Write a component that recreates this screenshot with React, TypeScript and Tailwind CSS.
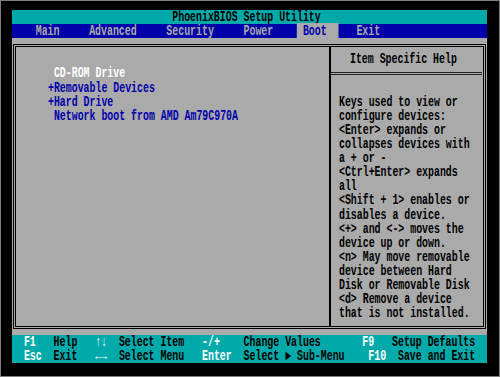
import React from "react";

const S = "origin-left scale-x-[0.70673] whitespace-pre";

function Row({ children, className = "" }: { children: React.ReactNode; className?: string }) {
  return <div className={`h-[14.12px] ${S} ${className}`}>{children}</div>;
}

const help = [
  "Keys used to view or",
  "configure devices:",
  "<Enter> expands or",
  "collapses devices with",
  "a + or -",
  "<Ctrl+Enter> expands",
  "all",
  "<Shift + 1> enables or",
  "disables a device.",
  "<+> and <-> moves the",
  "device up or down.",
  "<n> May move removable",
  "device between Hard",
  "Disk or Removable Disk",
  "<d> Remove a device",
  "that is not installed.",
];

function K({ children }: { children: React.ReactNode }) {
  return <span className="text-white">{children}</span>;
}

export default function App() {
  return (
    <div className="w-[500px] h-[377px] overflow-hidden bg-black border border-[#7f7f7f] pt-[9px] pl-[11px] font-['Liberation_Mono',monospace] text-[14px] leading-[14.12px] font-bold">
      <div className="w-[475px] h-[353px] flex flex-col bg-[#aaaaaa] overflow-hidden">
        {/* Title */}
        <div className="h-[14.12px] shrink-0 bg-[#00aaaa] text-black min-w-0">
          <Row>{"                           PhoenixBIOS Setup Utility"}</Row>
        </div>
        {/* Menu */}
        <div className="h-[14.12px] shrink-0 bg-[#0000aa] text-[#aaaaaa] min-w-0">
          <Row>
            {"    Main     Advanced     Security     Power    "}
            <span className="bg-[#aaaaaa] text-[#0000aa]">{" Boot  "}</span>
            {"   Exit"}
          </Row>
        </div>
        {/* Body */}
        <div className="h-[296.52px] shrink-0 pt-[5.76px] px-px">
          <div className="w-[473px] h-[285px] border-[3px] border-double border-black flex">
            <div className="w-[313px] min-w-0 shrink-0 pt-[19.48px] pl-[31.625px] text-[#0000aa]">
              <Row className="text-white">{" CD-ROM Drive"}</Row>
              <Row>{"+Removable Devices"}</Row>
              <Row>{"+Hard Drive"}</Row>
              <Row>{" Network boot from AMD Am79C970A"}</Row>
            </div>
            <div className="w-[2px] shrink-0 bg-black" />
            <div className="w-[151px] min-w-0 shrink-0 flex flex-col pt-[5.36px] text-black">
              <div className="pl-[19.44px] min-w-0">
                <Row>Item Specific Help</Row>
              </div>
              <div className="mt-[5.52px] h-0 w-full border-t-[3px] border-double border-[#202020]" />
              <div className="mt-[19.72px] pl-[7.56px] min-w-0">
                {help.map((l, i) => (
                  <Row key={i}>{l}</Row>
                ))}
              </div>
            </div>
          </div>
        </div>
        {/* Footer */}
        <div className="h-[28.24px] shrink-0 bg-[#00aaaa] text-black min-w-0">
          <Row>
            {"  "}<K>F1</K>{"   Help   "}<K>↑↓</K>{"  Select Item   "}<K>-/+</K>{"    Change Values       "}<K>F9</K>{"   Setup Defaults"}
          </Row>
          <Row>
            {"  "}<K>Esc</K>{"  Exit   "}<K>←→</K>{"  Select Menu   "}<K>Enter</K>{"  Select ► Sub-Menu    "}<K>F10</K>{"  Save and Exit"}
          </Row>
        </div>
      </div>
    </div>
  );
}
